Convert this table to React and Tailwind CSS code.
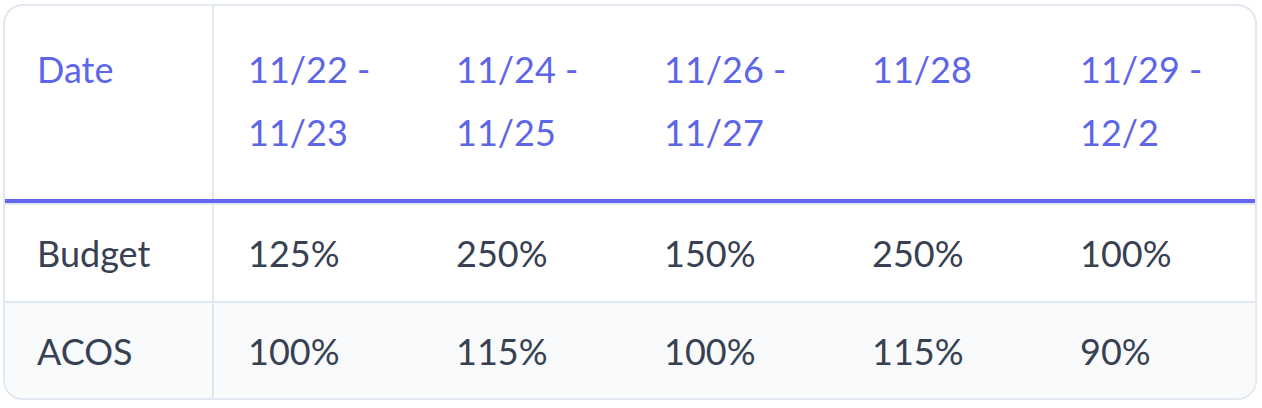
const dates = [
    ["11/22 -", "11/23"],
    ["11/24 -", "11/25"],
    ["11/26 -", "11/27"],
    ["11/28"],
    ["11/29 -", "12/2"],
];

const rows = [
    { label: "Budget", values: ["125%", "250%", "150%", "250%", "100%"], bg: "bg-white", h: "h-[96px]" },
    { label: "ACOS", values: ["100%", "115%", "100%", "115%", "90%"], bg: "bg-[#f8fafc]", h: "h-[95px]" },
];

export default function App() {
    return (
        <div className="min-h-screen bg-white pt-[4px] pl-[3px]" style={{ fontFamily: "Lato, 'Open Sans', sans-serif" }}>
            <div className="w-[1254px] border-2 border-[#e2e8f0] rounded-[20px] overflow-hidden text-[36px]">
                {/* Header */}
                <div className="grid grid-cols-[209px_repeat(5,208px)] h-[197px] border-b-4 border-[#6366f1] text-[#5d66e8]">
                    <div className="border-r-2 border-[#e2e8f0] pl-[32px] pt-[32px] leading-[63px]">Date</div>
                    {dates.map((d, i) => (
                        <div key={i} className="pl-[34px] pt-[32px] leading-[63px]">
                            {d.map((line, j) => (
                                <div key={j}>{line}</div>
                            ))}
                        </div>
                    ))}
                </div>

                {/* Body */}
                {rows.map((row) => (
                    <div key={row.label} className={`grid grid-cols-[209px_repeat(5,208px)] text-[#374151] ${row.bg} border-t-2 border-[#e2e8f0]`}>
                        <div className={`border-r-2 border-[#e2e8f0] pl-[32px] flex items-center ${row.h}`}>{row.label}</div>
                        {row.values.map((v, j) => (
                            <div key={j} className="pl-[34px] flex items-center">{v}</div>
                        ))}
                    </div>
                ))}
            </div>
        </div>
    );
}
